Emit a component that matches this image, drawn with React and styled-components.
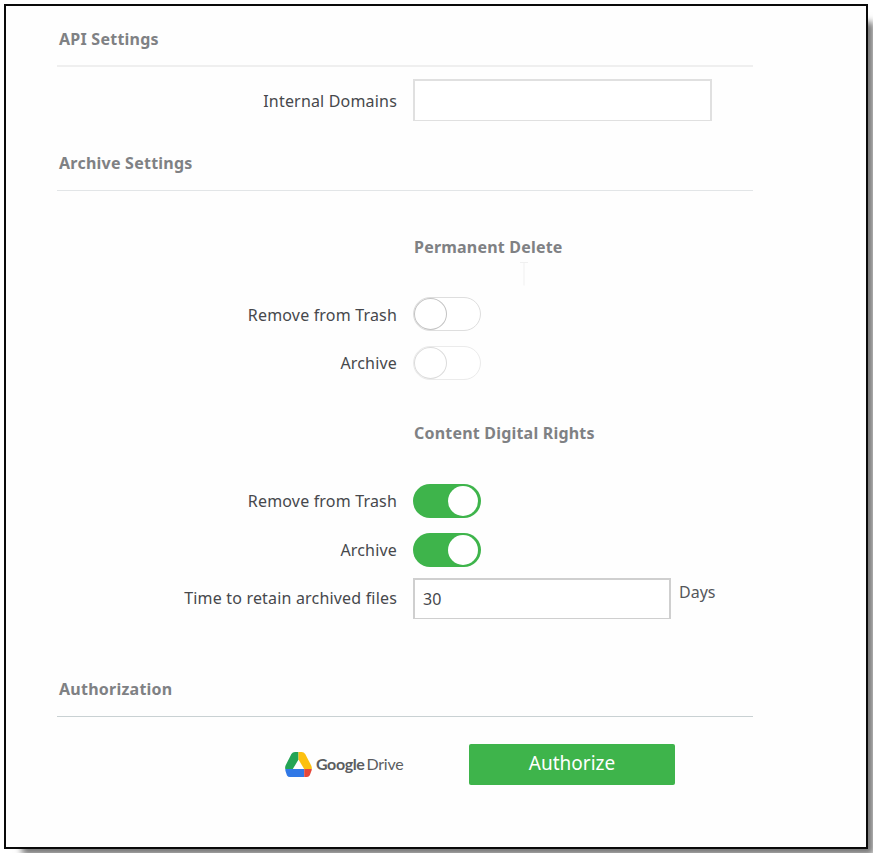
import { useState } from "react";
import styled, { createGlobalStyle } from "styled-components";

const GlobalStyle = createGlobalStyle`
  * {
    box-sizing: border-box;
  }
  body {
    margin: 0;
    background: #fff;
    font-family: "Noto Sans", "Open Sans", sans-serif;
    overflow: hidden;
  }
`;

const Page = styled.div`
  width: 873px;
  height: 853px;
  padding: 4px 5px 4px 4px;
  overflow: hidden;
`;

const Frame = styled.main`
  height: 845px;
  padding: 0 113px 0 51px;
  border: 2px solid #0a0a0a;
  background: #fefefe;
  box-shadow: 12px 12px 7px -6px #777;
`;

const SectionTitle = styled.h2`
  display: flex;
  align-items: flex-end;
  height: ${(props) => props.height}px;
  margin: 0;
  padding: 0 0 ${(props) => props.gap || 15}px 2px;
  border-bottom: ${(props) => props.rule};
  color: #7f8184;
  font-size: 16px;
  font-weight: 700;
  line-height: 24px;
  letter-spacing: 0.24px;
`;

// label column on the left, field column on the right
const Row = styled.div`
  display: grid;
  grid-template-columns: 340px 1fr;
  column-gap: 16px;
  align-items: center;
  height: ${(props) => props.height || 48.5}px;
  margin-top: ${(props) => props.top || 0}px;
`;

const Label = styled.label`
  padding-top: ${(props) => (props.$raised ? 0 : 1)}px;
  margin-top: ${(props) => (props.$raised ? -1 : 0)}px;
  color: #46484c;
  font-size: 16px;
  line-height: 24px;
  text-align: right;
  white-space: nowrap;
  letter-spacing: 0.18px;
`;

const GroupTitle = styled.h3`
  height: 24px;
  margin: ${(props) => props.top}px 0 0 357px;
  color: #7f8184;
  font-size: 16px;
  font-weight: 700;
  line-height: 24px;
  white-space: nowrap;
  letter-spacing: 0.2px;
`;

const Field = styled.div`
  display: flex;
  align-items: center;
  gap: 8px;
`;

const Input = styled.input`
  width: ${(props) => props.$width}px;
  height: ${(props) => props.$height}px;
  padding: 0 8px;
  border: 2px solid ${(props) => props.$line};
  border-bottom-width: 1px;
  outline: none;
  background: #fff;
  color: #46484c;
  font-family: inherit;
  font-size: 16px;
`;

const Unit = styled.span`
  margin-top: -12px;
  color: #55575b;
  font-size: 16px;
  line-height: 24px;
`;

const Switch = styled.button`
  display: flex;
  justify-content: ${(props) => (props.$on ? "flex-end" : "flex-start")};
  align-items: center;
  width: 68px;
  height: 34px;
  padding: ${(props) => (props.$on ? "0 3px" : "0")};
  border: ${(props) => (props.$on ? "none" : `1.5px solid ${props.$line}`)};
  border-radius: 17px;
  background: ${(props) => (props.$on ? "#3eb44b" : "#fff")};
`;

const Knob = styled.span`
  width: ${(props) => (props.$on ? 30 : 33)}px;
  height: ${(props) => (props.$on ? 30 : 32)}px;
  border: ${(props) => (props.$on ? "none" : `1.5px solid ${props.$line}`)};
  border-radius: 50%;
  background: #fff;
`;

const CursorLine = styled.div`
  display: flex;
  height: 26px;
  margin: 2px 0 0 462px;
`;

const AuthRow = styled.div`
  display: flex;
  align-items: center;
  margin: 27px 0 0 228px;
`;

const DriveLogo = styled.div`
  display: flex;
  align-items: center;
  width: 184px;
  color: #5b5d60;
  font-family: Lato, sans-serif;
  font-size: 16px;
`;

const DriveIcon = styled.svg`
  width: 27px;
  height: 25px;
  margin-right: 4px;
`;

const LogoWord = styled.span`
  margin: -2px ${(props) => props.gap || 0}px 0 0;
  font-weight: ${(props) => props.weight};
  letter-spacing: ${(props) => props.spacing}px;
`;

const AuthorizeButton = styled.button`
  width: 206px;
  height: 41px;
  padding: 0 0 3px;
  border: none;
  border-radius: 2px;
  background: #3eb44b;
  color: #fff;
  font-family: inherit;
  font-size: 19px;
`;

const Toggle = ({ initial, line, knobLine }) => {
  const [on, setOn] = useState(initial);
  return (
    <Switch
      type="button"
      role="switch"
      aria-checked={on}
      $on={on}
      $line={line}
      onClick={() => setOn(!on)}
    >
      <Knob $on={on} $line={knobLine} />
    </Switch>
  );
};

const GoogleDriveIcon = () => (
  <DriveIcon viewBox="0 0 27 25">
    <path
      d="M13.5 0H10Q7.6 0 6.4 2L.8 13Q-.2 15 .3 17H7.8L13.5 7.6z"
      fill="#23a455"
    />
    <path
      d="M13.5 0H16.6Q19 0 20.2 2L26.2 13.5Q27 15.2 26.8 17H19.2L13.5 7.6z"
      fill="#fcc010"
    />
    <path d="M.3 17H19.2V25H5Q3 25 2 23.4L.8 20Q.2 18.6 .3 17z" fill="#3078e6" />
    <path
      d="M19.2 17H26.8Q26.8 18.6 26 20L24.8 23.2Q23.9 25 22 25H19.2z"
      fill="#e5473a"
    />
  </DriveIcon>
);

const App = () => {
  const [domains, setDomains] = useState("");
  const [days, setDays] = useState("30");

  return (
    <Page>
      <GlobalStyle />
      <Frame>
        <SectionTitle height={61} gap={14} rule="2px solid #efefef">
          API Settings
        </SectionTitle>
        <Row height={42} top={12}>
          <Label>Internal Domains</Label>
          <Input
            $width={299}
            $height={42}
            $line="#e0e0e0"
            value={domains}
            onChange={(e) => setDomains(e.target.value)}
          />
        </Row>
        <SectionTitle height={70} rule="1px solid #e2e5e7">
          Archive Settings
        </SectionTitle>

        <GroupTitle top={44}>Permanent Delete</GroupTitle>
        {/* faint text cursor under the group title */}
        <CursorLine>
          <svg width="10" height="26" fill="none" stroke="#f0f0f0">
            <path d="M1 1.5h8M5 1.5v23" />
          </svg>
        </CursorLine>
        <Row top={3}>
          <Label>Remove from Trash</Label>
          <Toggle initial={false} line="#dedede" knobLine="#c4c4c4" />
        </Row>
        <Row>
          <Label>Archive</Label>
          <Toggle initial={false} line="#ebebeb" knobLine="#dcdcdc" />
        </Row>

        <GroupTitle top={34}>Content Digital Rights</GroupTitle>
        <Row top={32}>
          <Label $raised>Remove from Trash</Label>
          <Toggle initial={true} line="#dedede" knobLine="#c4c4c4" />
        </Row>
        <Row>
          <Label>Archive</Label>
          <Toggle initial={true} line="#dedede" knobLine="#c4c4c4" />
        </Row>
        <Row>
          <Label $raised>Time to retain archived files</Label>
          <Field>
            <Input
              $width={258}
              $height={41}
              $line="#cfcfcf"
              value={days}
              onChange={(e) => setDays(e.target.value)}
            />
            <Unit>Days</Unit>
          </Field>
        </Row>

        <SectionTitle height={94} rule="1px solid #c9d1d3">
          Authorization
        </SectionTitle>
        <AuthRow>
          <DriveLogo>
            <GoogleDriveIcon />
            <LogoWord weight={700} spacing={-0.4} gap={2}>
              Google
            </LogoWord>
            <LogoWord weight={400} spacing={-0.2}>
              Drive
            </LogoWord>
          </DriveLogo>
          <AuthorizeButton type="button">Authorize</AuthorizeButton>
        </AuthRow>
      </Frame>
    </Page>
  );
};

export default App;
